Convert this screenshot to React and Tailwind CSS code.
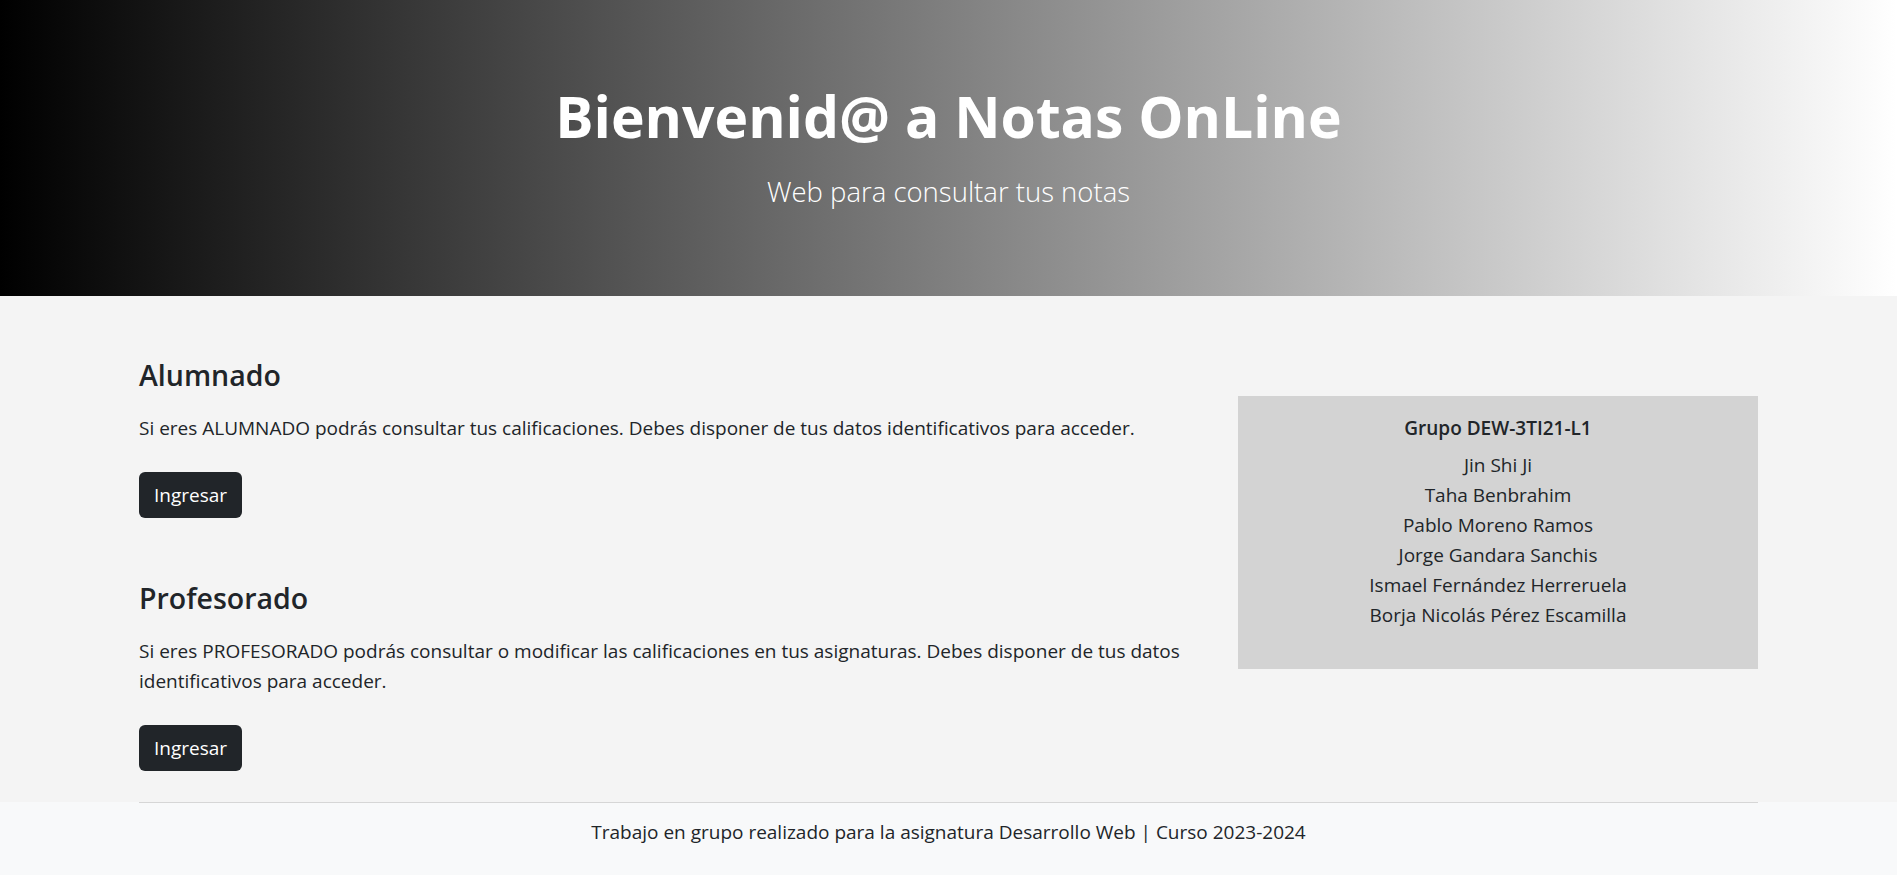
export default function App() {
  const names = [
    "Jin Shi Ji",
    "Taha Benbrahim",
    "Pablo Moreno Ramos",
    "Jorge Gandara Sanchis",
    "Ismael Fernández Herreruela",
    "Borja Nicolás Pérez Escamilla",
  ];
  return (
    <div className="font-['Open_Sans',sans-serif] text-[#212529] w-full">
      <header className="h-[296px] bg-[linear-gradient(to_right,#000000,#ffffff)] flex flex-col items-center pt-[82px]">
        <h1 className="text-white font-bold text-[57px] leading-[69.6px]">Bienvenid@ a Notas OnLine</h1>
        <p className="text-white font-light text-[27.5px] leading-[39px] mt-[20px]">Web para consultar tus notas</p>
      </header>
      <main className="bg-[#f4f4f4]">
        <div className="mx-auto w-[1619px] pt-[61px] pb-[31px] flex gap-[30px] items-start">
          <div className="w-[1069px]">
            <section>
              <h2 className="text-[28.5px] leading-[36px] font-semibold mb-[20px]">Alumnado</h2>
              <p className="text-[19px] leading-[30px] mb-[29px]">
                Si eres ALUMNADO podrás consultar tus calificaciones. Debes disponer de tus datos identificativos para acceder.
              </p>
              <button className="h-[46px] px-[15px] rounded-[6px] bg-[#212529] text-white text-[19px] leading-[30px]">Ingresar</button>
            </section>
            <section className="mt-[62px]">
              <h2 className="text-[28.5px] leading-[36px] font-semibold mb-[20px]">Profesorado</h2>
              <p className="text-[19px] leading-[30px] mb-[29px]">
                Si eres PROFESORADO podrás consultar o modificar las calificaciones en tus asignaturas. Debes disponer de tus datos identificativos para acceder.
              </p>
              <button className="h-[46px] px-[15px] rounded-[6px] bg-[#212529] text-white text-[19px] leading-[30px]">Ingresar</button>
            </section>
          </div>
          <aside className="w-[520px] mt-[39px] bg-[#d3d3d3] pt-[20px] pb-[39px] text-center">
            <h3 className="text-[19px] leading-[24px] font-semibold mb-[10px]">Grupo DEW-3TI21-L1</h3>
            <div className="text-[19px] leading-[30px]">
              {names.map((n) => (
                <div key={n}>{n}</div>
              ))}
            </div>
          </aside>
        </div>
      </main>
      <footer className="bg-[#f8f9fa] h-[73px]">
        <div className="mx-auto w-[1619px] border-t border-[#d6d6d6] pt-[14px] text-center text-[19px] leading-[30px]">
          Trabajo en grupo realizado para la asignatura Desarrollo Web | Curso 2023-2024
        </div>
      </footer>
    </div>
  );
}
